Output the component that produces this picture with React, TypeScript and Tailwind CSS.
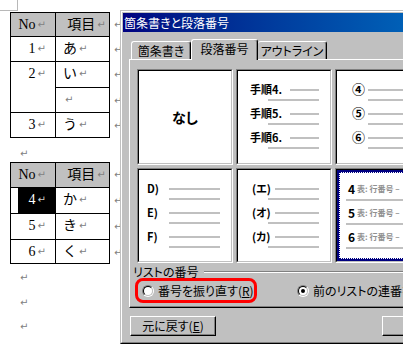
import React from 'react';

const mark = (light?: boolean) => (
  <span className={light ? "ml-[2px] font-['DejaVu_Sans',sans-serif] text-[10px] text-[#d0d0d0]" : "ml-[2px] font-['DejaVu_Sans',sans-serif] text-[10px] text-[#808080]"}>↵</span>
);

function NoCell({ children, top, gray, span }: { children?: React.ReactNode; top?: boolean; gray?: boolean; span?: boolean }) {
  return (
    <div
      className={[
        'border-l border-r border-b border-black flex justify-end pr-[9px] pt-[2px] leading-[20px]',
        top ? 'border-t' : '',
        gray ? 'bg-[#c0c0c0]' : '',
        span ? 'row-span-2' : '',
      ].join(' ')}
    >
      {children}
    </div>
  );
}

function ItemCell({ children, top, gray, center }: { children?: React.ReactNode; top?: boolean; gray?: boolean; center?: boolean }) {
  return (
    <div
      className={[
        'border-r border-b border-black flex pt-[2px] leading-[20px]',
        top ? 'border-t' : '',
        gray ? 'bg-[#c0c0c0]' : '',
        center ? 'justify-center pl-[8px]' : 'pl-[7px]',
      ].join(' ')}
    >
      {children}
    </div>
  );
}

function EndMark() {
  return <div className="pl-[2px] pt-[2px] leading-[20px]">{mark()}</div>;
}

function Box({ children, selected }: { children?: React.ReactNode; selected?: boolean }) {
  return (
    <div className="border border-t-[#808080] border-l-[#808080] border-r-white border-b-white">
      <div className="h-full border border-t-black border-l-black border-r-[#c0c0c0] border-b-[#c0c0c0] bg-white overflow-hidden">
        {selected ? (
          <div className="h-full border-2 border-[#000080]">
            <div className="h-full border border-dotted border-[#000080]">{children}</div>
          </div>
        ) : (
          children
        )}
      </div>
    </div>
  );
}

function Item({ label, labelW, indent, big }: { label: string; labelW: string; indent: string; big?: boolean }) {
  return (
    <div className="h-[24px]">
      <div className="flex items-end h-[10px]">
        <span className={`${labelW} shrink-0 ${big ? 'text-[13px] leading-[11px]' : 'text-[11px] leading-[10px]'} font-bold whitespace-nowrap`}>{label}</span>
        <span className="flex-1 h-[2px] mb-[3px] bg-[#c0c0c0]" />
      </div>
      <div className={`${indent} mt-[5px] h-[2px] bg-[#c0c0c0]`} />
    </div>
  );
}

function SelItem({ n }: { n: string }) {
  return (
    <div className="h-[24px]">
      <div className="flex items-center h-[12px] pl-[2px] whitespace-nowrap">
        <span className="text-[12px] font-bold leading-[12px]">{n}</span>
        <span className="ml-[2px] text-[8px] font-bold text-[#909090] leading-[12px]">表: 行番号 –</span>
      </div>
      <div className="mt-[4px] h-[2px] bg-[#c0c0c0]" />
    </div>
  );
}

function Radio({ checked }: { checked?: boolean }) {
  return (
    <span className="w-[12px] h-[12px] shrink-0 rounded-full border border-t-[#808080] border-l-[#808080] border-r-white border-b-white flex items-center justify-center">
      <span className="w-[10px] h-[10px] rounded-full bg-white border border-t-black border-l-black border-r-[#c0c0c0] border-b-[#c0c0c0] flex items-center justify-center">
        {checked && <span className="w-[4px] h-[4px] rounded-full bg-black" />}
      </span>
    </span>
  );
}

function Button({ children, w }: { children?: React.ReactNode; w: string }) {
  return (
    <div className={`${w} h-[20px] border border-t-white border-l-white border-r-black border-b-black shadow-[inset_-1px_-1px_#808080] flex items-center justify-center leading-[16px]`}>
      {children}
    </div>
  );
}

export default function App() {
  return (
    <div className="relative w-[403px] h-[350px] overflow-hidden bg-white text-black">
      {/* page corner mark */}
      <div className="w-[18px] h-[11px] border-r border-b border-[#b8b8b8]" />

      <div className="pl-[10px] pt-[1px] font-['Liberation_Serif','Noto_Sans_CJK_JP',serif] text-[14px]">
        <div className="grid grid-cols-[46px_54px_14px] grid-rows-[25px_25px_26px_25px_25px]">
          <NoCell top gray>No{mark()}</NoCell>
          <ItemCell top gray center>項目{mark()}</ItemCell>
          <EndMark />
          <NoCell>1{mark()}</NoCell>
          <ItemCell>あ{mark()}</ItemCell>
          <EndMark />
          <NoCell span>2{mark()}</NoCell>
          <ItemCell>い{mark()}</ItemCell>
          <EndMark />
          <ItemCell>{mark()}</ItemCell>
          <EndMark />
          <NoCell>3{mark()}</NoCell>
          <ItemCell>う{mark()}</ItemCell>
          <EndMark />
        </div>

        <div className="h-[24px] pl-[8px] pt-[5px] leading-[20px]">{mark()}</div>

        <div className="grid grid-cols-[46px_54px_14px] grid-rows-[26px_26px_26px_24px]">
          <NoCell top gray>No{mark()}</NoCell>
          <ItemCell top gray center>項目{mark()}</ItemCell>
          <EndMark />
          <div className="border-l border-r border-b border-black pl-[7px]">
            <div className="h-full bg-black text-white flex justify-end pr-[9px] pt-[2px] leading-[20px]">4{mark(true)}</div>
          </div>
          <ItemCell>か{mark()}</ItemCell>
          <EndMark />
          <NoCell>5{mark()}</NoCell>
          <ItemCell>き{mark()}</ItemCell>
          <EndMark />
          <NoCell>6{mark()}</NoCell>
          <ItemCell>く{mark()}</ItemCell>
          <EndMark />
        </div>

        <div className="h-[25px] pl-[8px] pt-[3px] leading-[20px]">{mark()}</div>
        <div className="h-[25px] pl-[8px] pt-[3px] leading-[20px]">{mark()}</div>
        <div className="h-[25px] pl-[8px] pt-[2px] leading-[20px]">{mark()}</div>
      </div>

      {/* dialog window */}
      <div className="absolute left-[120px] top-[10px] w-[420px] border border-t-[#c0c0c0] border-l-[#c0c0c0] border-r-black border-b-black bg-[#c0c0c0] font-['Noto_Sans_CJK_JP',sans-serif] text-[12px] [font-feature-settings:'palt']">
        <div className="border border-t-white border-l-white border-r-[#808080] border-b-[#808080] p-px pb-[6px]">
          <div className="h-[19px] bg-linear-to-r from-[#000080] to-[#1084d0] text-white leading-[19px] pl-[1px]">箇条書きと段落番号</div>

          <div className="mt-[7px] h-[20px] flex items-end pl-[8px]">
            <div className="w-[60px] h-[18px] rounded-t-[3px] border-t border-l border-r border-t-white border-l-white border-r-black shadow-[inset_-1px_0_#808080] flex items-center justify-center leading-[14px]">箇条書き</div>
            <div className="relative z-10 -mb-px w-[67px] h-[21px] rounded-t-[3px] bg-[#c0c0c0] border-t border-l border-r border-t-white border-l-white border-r-black shadow-[inset_-1px_0_#808080] flex items-center justify-center pb-[2px] leading-[14px]">段落番号</div>
            <div className="w-[69px] h-[18px] rounded-t-[3px] border-t border-r border-t-white border-r-black shadow-[inset_-1px_0_#808080] flex items-center justify-center leading-[14px]">アウトライン</div>
          </div>

          <div className="ml-[6px] mr-[6px] border border-t-white border-l-white border-r-black border-b-black shadow-[inset_-1px_-1px_#808080] pt-[9px] pl-[3px] pb-[4px]">
            <div className="ml-[4px] grid grid-cols-[96px_96px_96px] grid-rows-[96px_95px] gap-x-[3px] gap-y-[3px]">
              <Box>
                <div className="h-full flex items-center justify-center text-[14px] font-bold">なし</div>
              </Box>
              <Box>
                <div className="pt-[13px] pl-[12px] pr-[11px]">
                  <Item label="手順4." labelW="w-[40px]" indent="ml-[18px]" />
                  <Item label="手順5." labelW="w-[40px]" indent="ml-[18px]" />
                  <Item label="手順6." labelW="w-[40px]" indent="ml-[18px]" />
                </div>
              </Box>
              <Box>
                <div className="pt-[13px] pl-[15px]">
                  <Item label="④" labelW="w-[16px]" indent="ml-[16px]" big />
                  <Item label="⑤" labelW="w-[16px]" indent="ml-[16px]" big />
                  <Item label="⑥" labelW="w-[16px]" indent="ml-[16px]" big />
                </div>
              </Box>
              <Box>
                <div className="pt-[13px] pl-[8px] pr-[11px]">
                  <Item label="D)" labelW="w-[22px]" indent="ml-[22px]" />
                  <Item label="E)" labelW="w-[22px]" indent="ml-[22px]" />
                  <Item label="F)" labelW="w-[22px]" indent="ml-[22px]" />
                </div>
              </Box>
              <Box>
                <div className="pt-[13px] pl-[14px] pr-[11px]">
                  <Item label="(エ)" labelW="w-[23px]" indent="ml-[16px]" />
                  <Item label="(オ)" labelW="w-[23px]" indent="ml-[16px]" />
                  <Item label="(カ)" labelW="w-[23px]" indent="ml-[16px]" />
                </div>
              </Box>
              <Box selected>
                <div className="pt-[10px] pl-[6px]">
                  <SelItem n="4" />
                  <SelItem n="5" />
                  <SelItem n="6" />
                </div>
              </Box>
            </div>

            <div className="mt-[2px] h-[13px] flex items-center">
              <span className="leading-[13px]">リストの番号</span>
              <span className="ml-[6px] flex-1 h-[2px] border-t border-t-[#808080] border-b border-b-white" />
            </div>

            <div className="flex items-center">
              <div className="ml-[2px] w-[122px] h-[25px] border-[3px] border-[#ff0000] rounded-[8px] flex items-center pl-[4px]">
                <Radio />
                <span className="ml-[4px] whitespace-nowrap leading-[14px]">
                  番号を振り直す(<u>R</u>)
                </span>
              </div>
              <div className="ml-[40px] flex items-center whitespace-nowrap">
                <Radio checked />
                <span className="ml-[4px] leading-[14px]">前のリストの連番を継続する(<u>C</u>)</span>
              </div>
            </div>
          </div>

          <div className="mt-[8px] flex pl-[7px]">
            <Button w="w-[86px]">
              元に戻す(<u>E</u>)
            </Button>
            <div className="ml-[166px]">
              <Button w="w-[80px]">OK</Button>
            </div>
          </div>
        </div>
      </div>
    </div>
  );
}
